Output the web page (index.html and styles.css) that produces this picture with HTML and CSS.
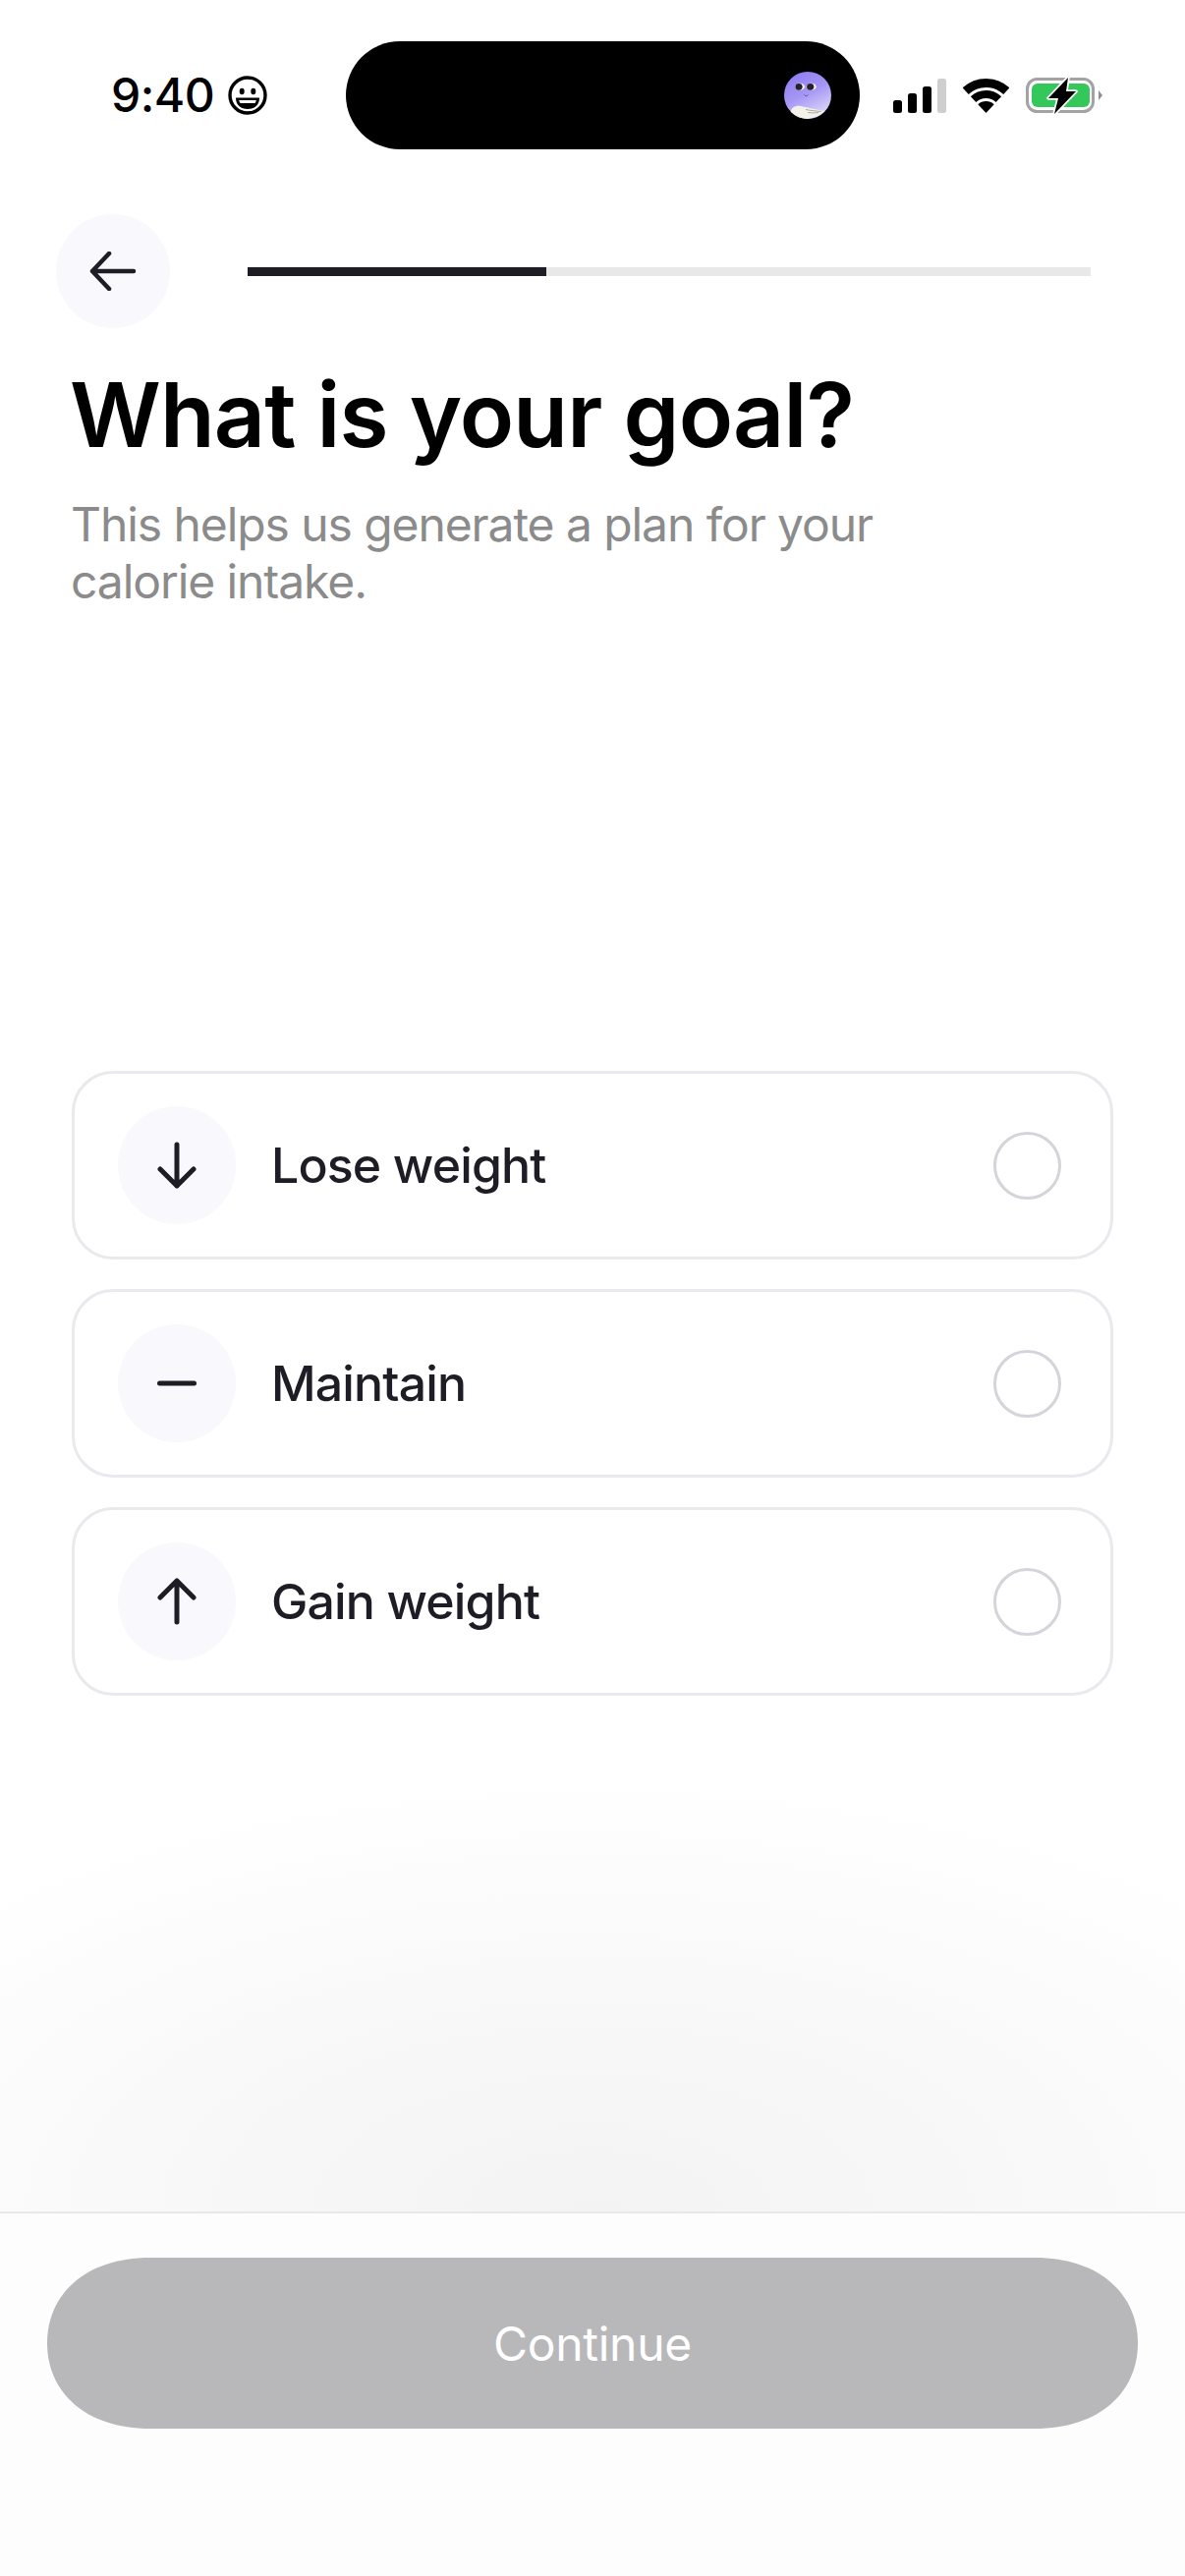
FILE: index.html
```html
<!DOCTYPE html>
<html lang="en">
<head>
<meta charset="utf-8">
<title>What is your goal?</title>
<link rel="stylesheet" href="styles.css">
</head>
<body>
<div class="screen">
  <header class="status">
    <div class="clock">
      <span class="time">9:40</span>
      <svg class="emoji" viewBox="0 0 40 40" aria-hidden="true">
        <circle cx="20" cy="20" r="18" fill="#fff" stroke="#000" stroke-width="3.4"/>
        <ellipse cx="14.200" cy="16" rx="2.500" ry="3.200" fill="#000"/>
        <ellipse cx="25.800" cy="16" rx="2.500" ry="3.200" fill="#000"/>
        <path d="M8 22.500H32C32 30 27 34 20 34S8 30 8 22.500Z" fill="#000"/>
        <path d="M11.200 25H28.800C28.500 26.200 28.100 27.200 27.500 28H12.500C11.900 27.200 11.500 26.200 11.200 25Z" fill="#fff"/>
      </svg>
    </div>
    <div class="island">
      <svg class="avatar" viewBox="0 0 48 48" aria-hidden="true">
        <defs>
          <linearGradient id="sky" x1=".25" y1="0" x2=".75" y2="1">
            <stop offset="0" stop-color="#8f7df4"/>
            <stop offset=".45" stop-color="#a596f4"/>
            <stop offset="1" stop-color="#e2dcfa"/>
          </linearGradient>
          <clipPath id="disc"><circle cx="24" cy="24" r="24"/></clipPath>
        </defs>
        <g clip-path="url(#disc)">
          <rect width="48" height="48" fill="url(#sky)"/>
          <path d="M7 41C7 36 12 34 17 35 22 36 30 38 41 40 38 43 34 46 24 48 16 48 9 46 7 41Z" fill="#f4f1ea"/>
          <path d="M22 38.500C27 39.500 32 40 38 40.500M24 41.500C28 42 32 42 35 41.500" fill="none" stroke="#8d8a80" stroke-width=".7"/>
        </g>
        <ellipse cx="16" cy="15.300" rx="5" ry="3.500" fill="#f5f2ea"/>
        <ellipse cx="27.700" cy="15.300" rx="5" ry="3.500" fill="#f5f2ea"/>
        <ellipse cx="15" cy="15.300" rx="3.600" ry="3.400" fill="#25202e"/>
        <ellipse cx="26.700" cy="15.300" rx="3.600" ry="3.400" fill="#25202e"/>
        <path d="M20.500 23.500C21.500 25 23.500 25 24.500 23.500" fill="none" stroke="#4a3f80" stroke-width=".8"/>
      </svg>
    </div>
    <div class="indicators">
      <svg class="signal" viewBox="0 0 54 35" aria-hidden="true">
        <rect x="0" y="22" width="9" height="13" rx="2.500" fill="#000"/>
        <rect x="15" y="15" width="9" height="20" rx="2.500" fill="#000"/>
        <rect x="30" y="8" width="9" height="27" rx="2.500" fill="#000"/>
        <rect x="45" y="0" width="9" height="35" rx="2.500" fill="#cfcfcf"/>
      </svg>
      <svg class="wifi" viewBox="0 0 47 35" aria-hidden="true">
        <path d="M2.700 12.700A30.500 30.500 0 0 1 44.300 12.700" fill="none" stroke="#000" stroke-width="9"/>
        <path d="M10.600 21.100A19 19 0 0 1 36.400 21.100" fill="none" stroke="#000" stroke-width="8"/>
        <path d="M23.500 35 15.300 26.200A12 12 0 0 1 31.700 26.200Z" fill="#000"/>
      </svg>
      <svg class="battery" viewBox="0 0 80 38" aria-hidden="true">
        <rect x="1.500" y="2.500" width="67" height="33" rx="10" fill="none" stroke="#a3a3a3" stroke-width="3"/>
        <rect x="6" y="7" width="59" height="24" rx="6" fill="#34c759"/>
        <path d="M74 14 78 19 74 24Z" fill="#8f8f8f"/>
        <path d="M43 1 23 22H33L29 38 51 15H41Z" fill="#000" stroke="#fff" stroke-width="3.500" paint-order="stroke" stroke-linejoin="round"/>
      </svg>
    </div>
  </header>

  <nav class="topbar">
    <button class="back" type="button" aria-label="Back">
      <svg viewBox="0 0 48 40" class="back-icon" aria-hidden="true">
        <path d="M45 20H3M20 2 3 20l17 18" fill="none" stroke="#1e1c24" stroke-width="4.500" stroke-linecap="round" stroke-linejoin="round"/>
      </svg>
    </button>
    <div class="progress"><div class="progress-fill"></div></div>
  </nav>

  <main class="content">
    <h1 class="title">What is your goal?</h1>
    <p class="subtitle">This helps us generate a plan for your calorie intake.</p>

    <ul class="options">
      <li class="option">
        <span class="option-icon">
          <svg viewBox="0 0 40 48" class="glyph" aria-hidden="true"><path d="M20 3v42M3 28l17 17 17-17" fill="none" stroke="#1e1c24" stroke-width="5" stroke-linecap="round" stroke-linejoin="round"/></svg>
        </span>
        <span class="option-label">Lose weight</span>
        <span class="radio"></span>
      </li>
      <li class="option">
        <span class="option-icon">
          <svg viewBox="0 0 40 48" class="glyph" aria-hidden="true"><path d="M2.500 24h35" fill="none" stroke="#1e1c24" stroke-width="5" stroke-linecap="round"/></svg>
        </span>
        <span class="option-label">Maintain</span>
        <span class="radio"></span>
      </li>
      <li class="option">
        <span class="option-icon">
          <svg viewBox="0 0 40 48" class="glyph" aria-hidden="true"><path d="M20 45V3M3 20 20 3l17 17" fill="none" stroke="#1e1c24" stroke-width="5" stroke-linecap="round" stroke-linejoin="round"/></svg>
        </span>
        <span class="option-label">Gain weight</span>
        <span class="radio"></span>
      </li>
    </ul>
  </main>

  <footer class="footer">
    <button class="continue" type="button">Continue</button>
  </footer>
</div>
</body>
</html>
```

FILE: styles.css
```css
* { box-sizing: border-box; }

html, body {
  margin: 0;
  padding: 0;
  background: #fff;
}

body {
  font-family: Inter, "Liberation Sans", sans-serif;
  color: #1e1c24;
}

.screen {
  width: 1206px;
  height: 2622px;
  display: flex;
  flex-direction: column;
  overflow: hidden;
}

/* status bar */
.status {
  height: 218px;
  padding: 42px 0 0 113px;
  display: flex;
  align-items: flex-start;
  flex-shrink: 0;
}

.clock {
  width: 239px;
  height: 110px;
  display: flex;
  align-items: center;
  gap: 14px;
  flex-shrink: 0;
}

.time {
  font-size: 48px;
  font-weight: 500;
  letter-spacing: -0.5px;
  line-height: 1;
  color: #000;
}

.emoji {
  width: 40px;
  height: 40px;
}

.island {
  width: 523px;
  height: 110px;
  border-radius: 55px;
  background: #000;
  display: flex;
  align-items: center;
  justify-content: flex-end;
  padding-right: 29px;
  flex-shrink: 0;
}

.avatar {
  width: 48px;
  height: 48px;
  display: block;
}

.indicators {
  height: 110px;
  margin-left: 34px;
  display: flex;
  align-items: center;
  gap: 17px;
  flex-shrink: 0;
}

.signal { width: 54px; height: 35px; }
.wifi { width: 47px; height: 35px; }
.battery { width: 80px; height: 38px; }

/* top bar */
.topbar {
  height: 116px;
  padding-left: 57px;
  display: flex;
  align-items: center;
  flex-shrink: 0;
}

.back {
  width: 116px;
  height: 116px;
  border: 0;
  padding: 0;
  border-radius: 50%;
  background: #f8f8fd;
  display: flex;
  align-items: center;
  justify-content: center;
}

.back-icon {
  width: 48px;
  height: 40px;
}

.progress {
  width: 858px;
  height: 9px;
  margin-left: 79px;
  background: #e8e8e8;
}

.progress-fill {
  width: 304px;
  height: 100%;
  background: #1e1c24;
}

/* content */
.content {
  flex: 1;
  padding: 0 73px;
  display: flex;
  flex-direction: column;
  background: radial-gradient(ellipse 900px 440px at 50% 100%, #f3f3f3 0%, #f9f9f9 55%, #ffffff 100%) no-repeat bottom / 100% 480px;
}

.title {
  margin: 40px 0 0 -2px;
  font-size: 91px;
  letter-spacing: -0.85px;
  line-height: 96px;
  font-weight: 600;
  color: #000;
}

.subtitle {
  margin: 35px 0 0 -1px;
  width: 860px;
  font-size: 48px;
  letter-spacing: -1.08px;
  line-height: 58px;
  font-weight: 400;
  color: #8b8b8b;
}

.options {
  list-style: none;
  margin: 469px 0 0;
  padding: 0;
  display: flex;
  flex-direction: column;
  gap: 30px;
}

.option {
  height: 192px;
  padding: 0 50px 0 44px;
  border: 3px solid #e9e9ee;
  border-radius: 42px;
  background: #fff;
  display: flex;
  align-items: center;
}

.option-icon {
  width: 120px;
  height: 120px;
  border-radius: 50%;
  background: #f8f8fd;
  display: flex;
  align-items: center;
  justify-content: center;
  flex-shrink: 0;
}

.glyph {
  width: 40px;
  height: 48px;
}

.option-label {
  flex: 1;
  margin-left: 36px;
  font-size: 50px;
  font-weight: 450;
  letter-spacing: -0.85px;
  line-height: 60px;
  color: #1e1c24;
}

.radio {
  width: 69px;
  height: 69px;
  border: 3px solid #d4d4da;
  border-radius: 50%;
  flex-shrink: 0;
}

/* footer */
.footer {
  height: 371px;
  flex-shrink: 0;
  border-top: 2px solid #e8e8e8;
  padding: 45px 48px 0;
  background: #fdfdfd;
}

.continue {
  width: 1110px;
  height: 174px;
  border: 0;
  background: #b8b8ba;
  clip-path: path("M0 87C0 38 38 0 105 0H1005C1072 0 1110 38 1110 87C1110 136 1072 174 1005 174H105C38 174 0 136 0 87Z");
  color: #fff;
  font-family: Inter, "Liberation Sans", sans-serif;
  font-size: 48px;
  font-weight: 400;
  letter-spacing: -0.3px;
}
```
